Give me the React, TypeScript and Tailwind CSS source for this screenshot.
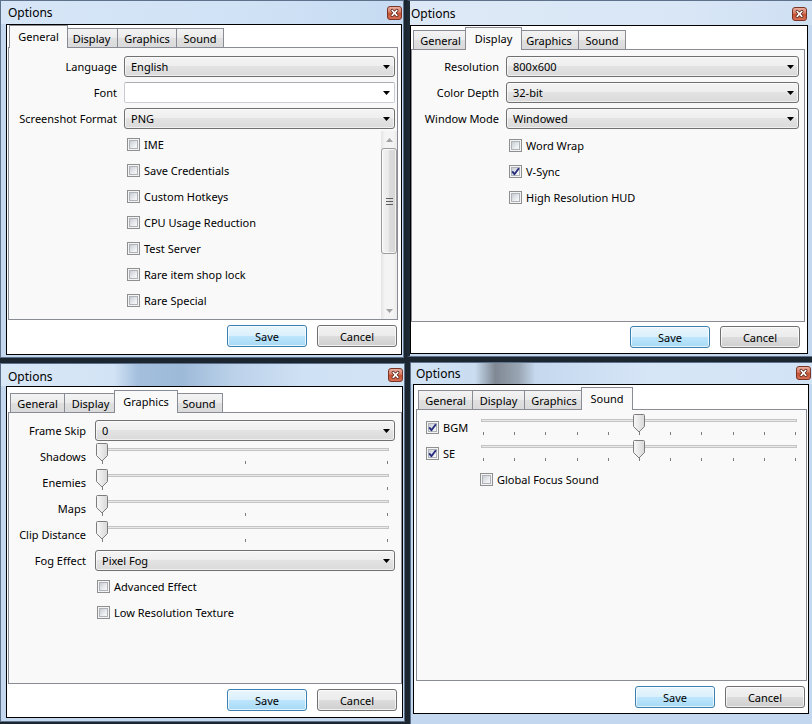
import React from 'react';

type TabName = 'General' | 'Display' | 'Graphics' | 'Sound';
const TABS: TabName[] = ['General', 'Display', 'Graphics', 'Sound'];

const TAB_UNSEL: Record<TabName, string> = {
  General: 'w-[55px]',
  Display: 'w-[53px] -ml-px',
  Graphics: 'w-[60px] -ml-px',
  Sound: 'w-[48px] -ml-px',
};
const TAB_SEL: Record<TabName, string> = {
  General: 'w-[59px] -ml-[2px] -mr-[2px]',
  Display: 'w-[57px] -ml-[3px] -mr-[2px]',
  Graphics: 'w-[64px] -ml-[3px] -mr-[2px]',
  Sound: 'w-[52px] -ml-[3px] -mr-[2px]',
};

function Tabs({ active, className }: { active: TabName; className: string }) {
  return (
    <div className={`flex items-end h-[22px] shrink-0 ${className}`}>
      {TABS.map((t) =>
        t === active ? (
          <div
            key={t}
            className={`${TAB_SEL[t]} h-[23px] -mb-px relative z-10 bg-[#f9f9f9] border border-b-0 border-[#898c95] flex items-center justify-center pb-[2px]`}
          >
            {t}
          </div>
        ) : (
          <div
            key={t}
            className={`${TAB_UNSEL[t]} h-[19px] border border-b-0 border-[#898c95] bg-[linear-gradient(#f3f3f3,#ebebeb_50%,#e0e0e0_50%,#dadada)] flex items-center justify-center`}
          >
            {t}
          </div>
        )
      )}
    </div>
  );
}

function Arrow() {
  return (
    <svg width="7" height="4" viewBox="0 0 7 4" className="block shrink-0">
      <path d="M0 0H7L3.5 4Z" fill="#000" />
    </svg>
  );
}

function Combo({ value, editable, className }: { value: string; editable?: boolean; className: string }) {
  return (
    <div
      className={`h-[21px] flex items-center justify-between pl-[6px] pr-[4px] border ${
        editable
          ? 'rounded-[2px] border-[#c9ccd3] border-t-[#abadb3] bg-white'
          : 'rounded-[3px] border-[#707070] bg-[linear-gradient(#f4f4f4,#eeeeee_50%,#e3e3e3_50%,#dadada)] shadow-[inset_0_0_0_1px_rgba(255,255,255,0.6)]'
      } ${className}`}
    >
      <span>{value}</span>
      <Arrow />
    </div>
  );
}

function ComboRow({
  label,
  value,
  editable,
  labelCls,
  comboCls,
}: {
  label: string;
  value: string;
  editable?: boolean;
  labelCls: string;
  comboCls: string;
}) {
  return (
    <div className="flex items-center h-[21px]">
      <div className={`${labelCls} shrink-0 text-right`}>{label}</div>
      <Combo value={value} editable={editable} className={`flex-1 ${comboCls}`} />
    </div>
  );
}

function Check({ checked }: { checked?: boolean }) {
  return (
    <div className="relative w-[13px] h-[13px] border border-[#8e8f8f] bg-[#f4f4f4] p-[1px] shrink-0">
      <div className="w-full h-full border border-[#aeb3b9] bg-[linear-gradient(135deg,#c9cdd3,#eef0f2_70%,#f7f7f7)]" />
      {checked && (
        <svg width="11" height="11" viewBox="0 0 11 11" className="absolute left-0 top-0 block">
          <path d="M2.2 5.4 L4.4 8.2 L8.9 2.2" fill="none" stroke="#262c7e" strokeWidth="1.9" strokeLinejoin="round" />
        </svg>
      )}
    </div>
  );
}

function CheckRow({ label, checked, className = '' }: { label: string; checked?: boolean; className?: string }) {
  return (
    <div className={`h-[26px] flex items-center gap-[4px] shrink-0 ${className}`}>
      <Check checked={checked} />
      <span className="whitespace-nowrap">{label}</span>
    </div>
  );
}

function Slider({ w, ticks, value }: { w: number; ticks: number[]; value: number }) {
  const a = 7;
  const span = w - 2 * a - 1;
  const cx = a + Math.round(value * span);
  const thumb = `M${cx - 4.5} 0.5 H${cx + 4.5} Q${cx + 5.5} 0.5 ${cx + 5.5} 1.5 V12.5 L${cx} 18 L${cx - 5.5} 12.5 V1.5 Q${cx - 5.5} 0.5 ${cx - 4.5} 0.5 Z`;
  return (
    <svg width={w} height={22} viewBox={`0 0 ${w} 22`} className="block shrink-0">
      <defs>
        <linearGradient id="tgrad" x1="0" y1="0" x2="1" y2="0">
          <stop offset="0" stopColor="#f8f8f8" />
          <stop offset="1" stopColor="#d8d8d8" />
        </linearGradient>
      </defs>
      <rect x={a - 1.5} y={5.5} width={span + 3} height={2} fill="#e9e9e9" stroke="#c4c4c4" />
      {ticks.map((t) => (
        <rect key={t} x={a + Math.round(t * span)} y={18} width={1} height={3} fill="#7e7e7e" />
      ))}
      <path d={thumb} fill="url(#tgrad)" stroke="#7c7c7c" />
    </svg>
  );
}

function VScroll() {
  return (
    <div className="w-[16px] h-full shrink-0 flex flex-col bg-[linear-gradient(to_right,#e4e4e4,#f4f4f4_25%,#f4f4f4_75%,#eaeaea)]">
      <div className="h-[17px] shrink-0 flex items-center justify-center">
        <svg width="7" height="4" viewBox="0 0 7 4" className="block">
          <path d="M0 4H7L3.5 0Z" fill="#a3a3a3" />
        </svg>
      </div>
      <div className="h-[106px] shrink-0 rounded-[3px] border border-[#9b9b9b] bg-[linear-gradient(to_right,#f3f3f3,#e9e9e9_50%,#dcdcdc_50%,#d6d6d6)] shadow-[inset_0_0_0_1px_rgba(255,255,255,0.7)] flex items-center justify-center">
        <svg width="7" height="7" viewBox="0 0 7 7" className="block">
          <rect x="0" y="0" width="7" height="1" fill="#5d5d5d" />
          <rect x="0" y="3" width="7" height="1" fill="#5d5d5d" />
          <rect x="0" y="6" width="7" height="1" fill="#5d5d5d" />
        </svg>
      </div>
      <div className="flex-1" />
      <div className="h-[17px] shrink-0 flex items-center justify-center">
        <svg width="7" height="4" viewBox="0 0 7 4" className="block">
          <path d="M0 0H7L3.5 4Z" fill="#a3a3a3" />
        </svg>
      </div>
    </div>
  );
}

function CloseBtn({ className }: { className: string }) {
  return (
    <svg width="15" height="14" viewBox="0 0 15 14" className={`block shrink-0 ${className}`}>
      <defs>
        <linearGradient id="cgrad" x1="0" y1="0" x2="0" y2="1">
          <stop offset="0" stopColor="#ecb5a7" />
          <stop offset="0.45" stopColor="#d67b64" />
          <stop offset="0.5" stopColor="#c4502f" />
          <stop offset="1" stopColor="#d9735b" />
        </linearGradient>
      </defs>
      <rect x="0.5" y="0.5" width="14" height="13" rx="2.5" fill="url(#cgrad)" stroke="#7b3527" />
      <path d="M5.2 4.5 L9.8 9.3 M9.8 4.5 L5.2 9.3" stroke="#5b2317" strokeWidth="3.2" strokeLinecap="round" />
      <path d="M5.2 4.5 L9.8 9.3 M9.8 4.5 L5.2 9.3" stroke="#ffffff" strokeWidth="1.7" strokeLinecap="round" />
    </svg>
  );
}

function Btn({ label, primary }: { label: string; primary?: boolean }) {
  return (
    <div
      className={`w-[80px] h-[22px] rounded-[3px] border flex items-center justify-center shadow-[inset_0_0_0_1px_rgba(255,255,255,0.7)] ${
        primary
          ? 'border-[#3c7fb1] bg-[linear-gradient(#eaf6fd,#d9f0fc_50%,#bee6fd_50%,#a7d9f5)]'
          : 'border-[#707070] bg-[linear-gradient(#f2f2f2,#ebebeb_50%,#dddddd_50%,#cfcfcf)]'
      }`}
    >
      {label}
    </div>
  );
}

type DialogProps = {
  active: TabName;
  frameCls: string;
  titleCls: string;
  textCls: string;
  closeCls: string;
  clientCls: string;
  stripCls: string;
  panelCls: string;
  btnCls: string;
  children: React.ReactNode;
};

function Dialog(p: DialogProps) {
  return (
    <div className={`flex flex-col shrink-0 bg-[#c3d8ef] border-[#5d728a] ${p.frameCls}`}>
      <div className={`flex items-start justify-between shrink-0 ${p.titleCls}`}>
        <span className={`text-[12px] leading-[16px] text-black ${p.textCls}`}>Options</span>
        <CloseBtn className={p.closeCls} />
      </div>
      <div className={`flex-1 min-h-0 flex flex-col border border-black bg-white ${p.clientCls}`}>
        <Tabs active={p.active} className={p.stripCls} />
        <div className={`flex-1 min-h-0 flex flex-col border border-[#898c95] bg-[#f9f9f9] ${p.panelCls}`}>
          {p.children}
        </div>
        <div className={`flex justify-end gap-[10px] shrink-0 ${p.btnCls}`}>
          <Btn label="Save" primary />
          <Btn label="Cancel" />
        </div>
      </div>
    </div>
  );
}

export default function App() {
  return (
    <div className="w-[812px] h-[724px] overflow-hidden bg-[#1b2631] flex flex-col text-[11px] leading-[15px] text-black font-['Noto_Sans',sans-serif]">
      {/* top row */}
      <div className="flex h-[358px] shrink-0 items-start">
        <Dialog
          active="General"
          frameCls="w-[404px] h-[358px] border"
          titleCls="h-[23px] pl-[7px] pr-[1px] bg-[linear-gradient(to_right,#d6e6f7,#d0e2f5_60%,#c6dbf2)]"
          textCls="mt-[4px]"
          closeCls="mt-[5px]"
          clientCls="ml-[5px] mr-[1px] mb-[2px]"
          stripCls="pl-[4px]"
          panelCls="ml-[1px] mr-[3px]"
          btnCls="mt-[5px] pr-[4px] pb-[7px]"
        >
          <div className="pt-[8px] flex flex-col gap-[5px] shrink-0">
            <ComboRow label="Language" value="English" labelCls="w-[108px]" comboCls="ml-[7px] mr-[2px]" />
            <ComboRow label="Font" value="" editable labelCls="w-[108px]" comboCls="ml-[7px] mr-[2px]" />
            <ComboRow label="Screenshot Format" value="PNG" labelCls="w-[108px]" comboCls="ml-[7px] mr-[2px]" />
          </div>
          <div className="mt-[2px] flex-1 min-h-0 flex">
            <div className="flex-1 overflow-hidden pl-[118px] flex flex-col">
              <CheckRow label="IME" />
              <CheckRow label="Save Credentials" />
              <CheckRow label="Custom Hotkeys" />
              <CheckRow label="CPU Usage Reduction" />
              <CheckRow label="Test Server" />
              <CheckRow label="Rare item shop lock" />
              <CheckRow label="Rare Special" />
            </div>
            <VScroll />
          </div>
        </Dialog>
        <div className="w-[3px] shrink-0" />
        <Dialog
          active="Display"
          frameCls="w-[405px] h-[357px] border-t border-b border-l-[3px] border-l-[#1e2a36]"
          titleCls="h-[24px] pl-[1px] pr-[5px] bg-[linear-gradient(to_right,#dde9f6,#d8e6f6_70%,#cfe0f3)]"
          textCls="mt-[5px]"
          closeCls="mt-[6px]"
          clientCls="mr-[4px] mb-[2px]"
          stripCls="pt-[1px] pl-[2px] h-[23px]"
          panelCls="mr-[2px]"
          btnCls="mt-[4px] pr-[7px] pb-[5px]"
        >
          <div className="pt-[6px] flex flex-col gap-[5px] shrink-0">
            <ComboRow label="Resolution" value="800x600" labelCls="w-[87px]" comboCls="ml-[7px] mr-[5px]" />
            <ComboRow label="Color Depth" value="32-bit" labelCls="w-[87px]" comboCls="ml-[7px] mr-[5px]" />
            <ComboRow label="Window Mode" value="Windowed" labelCls="w-[87px]" comboCls="ml-[7px] mr-[5px]" />
          </div>
          <div className="mt-[3px] pl-[97px] flex flex-col">
            <CheckRow label="Word Wrap" />
            <CheckRow label="V-Sync" checked />
            <CheckRow label="High Resolution HUD" />
          </div>
        </Dialog>
      </div>

      {/* bottom row */}
      <div className="flex mt-[4px] h-[362px] shrink-0 items-start">
        <Dialog
          active="Graphics"
          frameCls="w-[405px] h-[359px] mt-[1px] border"
          titleCls="h-[22px] pl-[7px] pr-[1px] bg-[linear-gradient(to_right,#d9e8f7_0%,#d2e3f5_28%,#a3bfdd_34%,#9dbad9_45%,#bcd2ea_58%,#cfe1f4_75%,#d3e4f5_100%)]"
          textCls="mt-[5px]"
          closeCls="mt-[4px]"
          clientCls="ml-[5px] mr-[1px] mb-[3px]"
          stripCls="pt-[3px] pl-[3px] h-[25px]"
          panelCls="ml-[1px]"
          btnCls="mt-[5px] pr-[5px] pb-[6px]"
        >
          <div className="pt-[7px] shrink-0">
            <ComboRow label="Frame Skip" value="0" labelCls="w-[77px]" comboCls="ml-[9px] mr-[6px]" />
          </div>
          <div className="mt-[2px] flex flex-col shrink-0">
            {[
              { l: 'Shadows', t: [0, 0.5, 1] },
              { l: 'Enemies', t: [0, 1] },
              { l: 'Maps', t: [0, 0.5, 1] },
              { l: 'Clip Distance', t: [0, 0.5, 1] },
            ].map((r) => (
              <div key={r.l} className="flex h-[26px] items-start">
                <div className="w-[77px] shrink-0 text-right pt-[6px]">{r.l}</div>
                <div className="ml-[9px]">
                  <Slider w={300} ticks={r.t} value={0} />
                </div>
              </div>
            ))}
          </div>
          <div className="mt-[3px] shrink-0">
            <ComboRow label="Fog Effect" value="Pixel Fog" labelCls="w-[77px]" comboCls="ml-[9px] mr-[6px]" />
          </div>
          <div className="mt-[2px] pl-[88px] flex flex-col">
            <CheckRow label="Advanced Effect" />
            <CheckRow label="Low Resolution Texture" />
          </div>
        </Dialog>
        <div className="w-[5px] shrink-0" />
        <Dialog
          active="Sound"
          frameCls="w-[402px] h-[362px] border-t border-l"
          titleCls="h-[21px] pl-[5px] pr-[1px] bg-[linear-gradient(to_right,#d4e4f5_0%,#c9dcf0_16%,#7f8893_21%,#9aa6b4_27%,#c5d8ee_31%,#d6e6f7_60%,#d2e3f5_100%)]"
          textCls="mt-[3px]"
          closeCls="mt-[3px]"
          clientCls="ml-[2px] mr-[3px] mb-[10px]"
          stripCls="pt-[2px] pl-[4px] h-[24px]"
          panelCls="ml-[2px] mr-[1px]"
          btnCls="mt-[5px] pr-[3px] pb-[5px]"
        >
          <div className="pt-[4px] pl-[9px] flex flex-col">
            {[
              { l: 'BGM' },
              { l: 'SE' },
            ].map((r) => (
              <div key={r.l} className="flex h-[26px] items-start">
                <div className="w-[50px] h-[26px] shrink-0 flex items-center gap-[4px]">
                  <Check checked />
                  <span>{r.l}</span>
                </div>
                <Slider w={327} ticks={[0, 0.1, 0.2, 0.3, 0.4, 0.5, 0.6, 0.7, 0.8, 0.9, 1]} value={0.5} />
              </div>
            ))}
            <CheckRow label="Global Focus Sound" className="pl-[54px]" />
          </div>
        </Dialog>
      </div>
    </div>
  );
}
